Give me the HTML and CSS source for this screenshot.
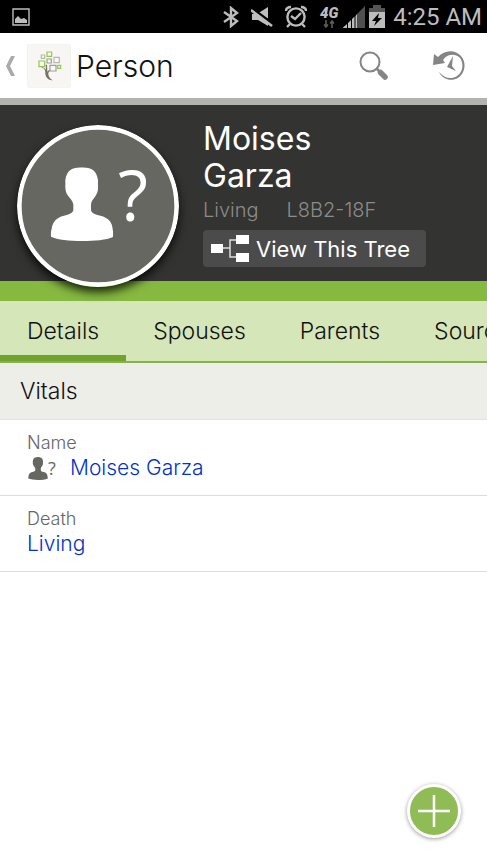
FILE: index.html
```html
<!DOCTYPE html>
<html lang="en">
<head>
<meta charset="utf-8">
<meta name="viewport" content="width=device-width, initial-scale=1">
<title>Person</title>
<link rel="stylesheet" href="styles.css">
</head>
<body>
<svg class="defs" aria-hidden="true">
  <symbol id="bust" viewBox="0 0 188 222">
    <path d="M93 0C122 0 138 10 142 38V60C143 72 137 84 131 91C125 98 121 104 121 113V128C123 139 134 141 149 145C173 151 184 164 186 185C188 197 188 204 187 209C168 218 132 221 94 221C56 221 20 217 1 208C0 200 0 195 3 184C6 164 16 151 40 145C55 141 66 138 68 128V112C67 104 62 97 57 91C50 83 44 74 44 61V38C48 10 64 0 93 0Z"/>
  </symbol>
</svg>
<div class="status">
  <svg width="18" height="18" viewBox="0 0 18 18"><path d="M1 1H17V17H1Z" fill="none" stroke="#bdbdbd" stroke-width="1.4"/><path d="M3 15V11L6 8L8 10L9 11L12 10L15 12V15Z" fill="#bdbdbd"/></svg>
  <div class="status-icons">
    <svg class="spaced" width="16" height="22" viewBox="0 0 16 22"><path d="M1 6L14 15L8 20V2L14 7L1 16" fill="none" stroke="#bdbdbd" stroke-width="2.4"/></svg>
    <svg class="spaced" width="22" height="22" viewBox="1 0 22 22"><path d="M2 8H7L18 1V20L8 14H2Z" fill="#bdbdbd"/><path d="M1 2L23 18" stroke="#000" stroke-width="3"/><path d="M1 4L22 20" stroke="#bdbdbd" stroke-width="2.6"/></svg>
    <svg class="spaced" width="22" height="24" viewBox="1 0 22 24" fill="none" stroke="#bdbdbd" stroke-width="2.4"><circle cx="12" cy="12" r="8.6"/><path d="M2 6C2 3 4 2 7 2M22 6C22 3 20 2 17 2M6 19L3 22M18 19L21 22M7 11L11 14L17 8"/></svg>
    <div class="network"><span>4G</span><svg width="12" height="8" viewBox="0 0 12 8" fill="none" stroke="#5c5c5c" stroke-width="1.6"><path d="M3 0V7M1 4.500L3 7L5 4.500M9 8V1M7 3.500L9 1L11 3.500"/></svg></div>
    <svg width="22" height="22" viewBox="0 0 22 22"><path d="M14 8L22 0V22H14Z" fill="#505050"/><path d="M0 22V21.500L4 18V22ZM5 22V17L8 14V22ZM9 22V13L11.500 10.500V22ZM12.500 22V10L14 8V22Z" fill="#bdbdbd"/></svg>
    <svg width="16" height="23" viewBox="0 0 16 23"><path d="M4 0H12V3H16V8H0V3H4Z" fill="#555"/><path d="M0 7H16V23H0Z" fill="#bdbdbd"/><path d="M10 8L3 16H7L5 21L13 13H9Z" fill="#000"/></svg>
  </div>
  <time>4:25 AM</time>
</div>
<header class="appbar">
  <button class="back" aria-label="Back"><svg width="10" height="20" viewBox="0 0 10 20"><path d="M5 0H9L4 10L9 20H5L0 10Z" fill="#aaa"/></svg></button>
  <svg class="logo" width="44" height="44" viewBox="0 0 132 132">
    <rect x="1" y="1" width="130" height="130" rx="7" fill="#f7f6f3" stroke="#efeeeb" stroke-width="2"/>
    <path d="M43 70C52 72 56 80 55 90C56 99 62 107 73 109H77C67 103 63 95 64 88C65 83 69 80 75 79V76C69 76 64 79 61 83L60 62H56L57 77C53 71 48 69 43 68Z" fill="#7a7067"/>
    <g fill="#f8f8f5" stroke-width="3.600"><path d="M60 24H74V37H60ZM36 51H53V68H36ZM92 64H101V73H92Z" stroke="#93c84e"/><path d="M43 33H53V43H43ZM81 40H97V56H81Z" stroke="#b9b7b2"/><path d="M60 45H73V57H60ZM69 64H87V81H69Z" stroke="#a19d97"/></g>
  </svg>
  <h1>Person</h1>
  <button class="search" aria-label="Search"><svg width="30" height="30" viewBox="0 0 30 30"><circle cx="11" cy="11" r="9.500" fill="none" stroke="#858585" stroke-width="2"/><path d="M17 17L21 21" stroke="#858585" stroke-width="2.500"/><path d="M21.500 21.500L26 26" stroke="#858585" stroke-width="5.500" stroke-linecap="round"/></svg></button>
  <button class="history" aria-label="History"><svg width="32" height="30" viewBox="0 0 32 30" fill="#858585"><path d="M1 3L5 6C11 -1 22 -2 28 5C34 12 32 22 25 27C18 31 9 28 6 21C11 27 18 29 24 25C30 21 31 13 27 7C22 2 14 3 10 9L12 12L0 14Z"/><path d="M20 5L19 15L23 20L14 16Z"/></svg></button>
</header>
<main>
  <section class="hero">
    <svg class="avatar" width="162" height="162" viewBox="0 0 486 486" role="img" aria-label="Portrait placeholder">
      <circle cx="243" cy="243" r="236" fill="#666761" stroke="#fff" stroke-width="14"/>
      <use href="#bust" x="101" y="127" width="188" height="222" fill="#fff"/>
      <text x="303" y="289" class="avatar-mark">?</text>
    </svg>
    <div class="identity">
      <h2>Moises<br>Garza</h2>
      <p><span>Living</span><span>L8B2-18F</span></p>
      <button class="tree"><svg width="38" height="27" viewBox="0 0 38 27"><path d="M12 13H19M25 5H19V22H25" fill="none" stroke="#ddd" stroke-width="1.500"/><path d="M0 9H12V18H0ZM25 0H38V9H25ZM25 18H38V27H25Z" fill="#fff"/></svg>View This Tree</button>
    </div>
  </section>
  <nav class="tabs">
    <a href="#details" class="active" aria-current="page">Details</a><a href="#spouses">Spouses</a><a href="#parents">Parents</a><a href="#sources">Sources</a>
  </nav>
  <section id="details">
    <h3>Vitals</h3>
    <dl>
      <div class="row"><dt>Name</dt><dd><svg width="29" height="23" viewBox="0 0 29 23"><use href="#bust" width="20" height="23" x="1" fill="#666761"/><text x="21" y="18" class="mini-mark">?</text></svg><a href="#name">Moises Garza</a></dd></div>
      <div class="row"><dt>Death</dt><dd><a href="#death">Living</a></dd></div>
    </dl>
  </section>
</main>
<button class="fab" aria-label="Add"><svg width="32" height="32" viewBox="0 0 32 32"><path d="M16 0V32M0 16H32" stroke="#fff" stroke-width="2.500"/></svg></button>
</body>
</html>
```
FILE: styles.css
```css
* { box-sizing: border-box; }
body { margin: 0; min-height: 100vh; background: #fff; color: #111; font-family: Inter, "Open Sans", sans-serif; font-weight: 300; overflow-x: hidden; }
h1, h2, h3, p, dl, dd { margin: 0; font-weight: inherit; }
button { border: 0; padding: 0; background: none; font: inherit; color: inherit; cursor: pointer; }
a { text-decoration: none; color: inherit; }
svg { display: block; flex: none; }
.defs { display: none; }

.status { display: flex; align-items: center; height: 33px; padding: 0 5px 0 12px; background: #000; color: #bdbdbd; }
.status-icons { display: flex; align-items: center; gap: 4px; margin-left: auto; }
.spaced { margin-right: 8px; }
.network { display: flex; flex-direction: column; align-items: center; width: 20px; font: italic 900 15px/14px Roboto, sans-serif; }
.status time { margin-left: 8px; font: 400 24px/32px Roboto, sans-serif; }

.appbar { display: flex; align-items: center; height: 65px; padding: 0 22px 0 6px; }
.back { margin-right: 11px; }
.logo { margin-right: 5px; }
h1 { font-size: 30px; line-height: 40px; }
.search { margin-left: auto; margin-right: 44px; }

.hero { display: flex; align-items: flex-start; gap: 24px; height: 203px; padding: 20px 17px 0; border-top: 7px solid #b3b4ae; border-bottom: 20px solid #86b940; background: #333331; }
.avatar { border-radius: 50%; box-shadow: 0 5px 10px rgba(0, 0, 0, .8); }
.avatar-mark { fill: #fff; font: 500 208px "Open Sans", sans-serif; }
.identity { color: #fff; font-weight: 400; }
h2 { margin-top: -5px; font-size: 32px; line-height: 37px; }
.identity p { display: flex; gap: 28px; margin: 4px 0 8px; font-size: 20px; line-height: 24px; color: #8c8c88; font-weight: 300; }
.tree { display: flex; align-items: center; gap: 7px; height: 37px; padding: 0 16px 0 8px; border-radius: 4px; background: #4b4b4b; font-size: 22px; white-space: nowrap; }

.tabs { display: flex; height: 62px; overflow: hidden; border-bottom: 2px solid #83b34b; background: #d5e6b9; font-size: 23px; line-height: 61px; }
.tabs a { flex: none; padding: 0 27px; }
.tabs .active { border-bottom: 6px solid #72a12d; }

h3 { height: 57px; padding-left: 20px; border-bottom: 1px solid #e4e4e0; background: #eeeee9; font-size: 23px; line-height: 56px; }
.row { height: 76px; padding: 11px 27px; border-bottom: 1px solid #ddd; }
dt { font-size: 18px; line-height: 24px; color: #666; }
dd { display: flex; align-items: center; gap: 14px; font-size: 21px; line-height: 26px; color: #0033cc; }
.mini-mark { fill: #666761; font: 400 18px "Open Sans", sans-serif; }

.fab { position: fixed; right: 26px; bottom: 27px; display: grid; place-items: center; width: 54px; height: 54px; border: 3px solid #fff; border-radius: 50%; background: #8fbc55; box-shadow: 0 1px 4px rgba(0, 0, 0, .4); }
```
